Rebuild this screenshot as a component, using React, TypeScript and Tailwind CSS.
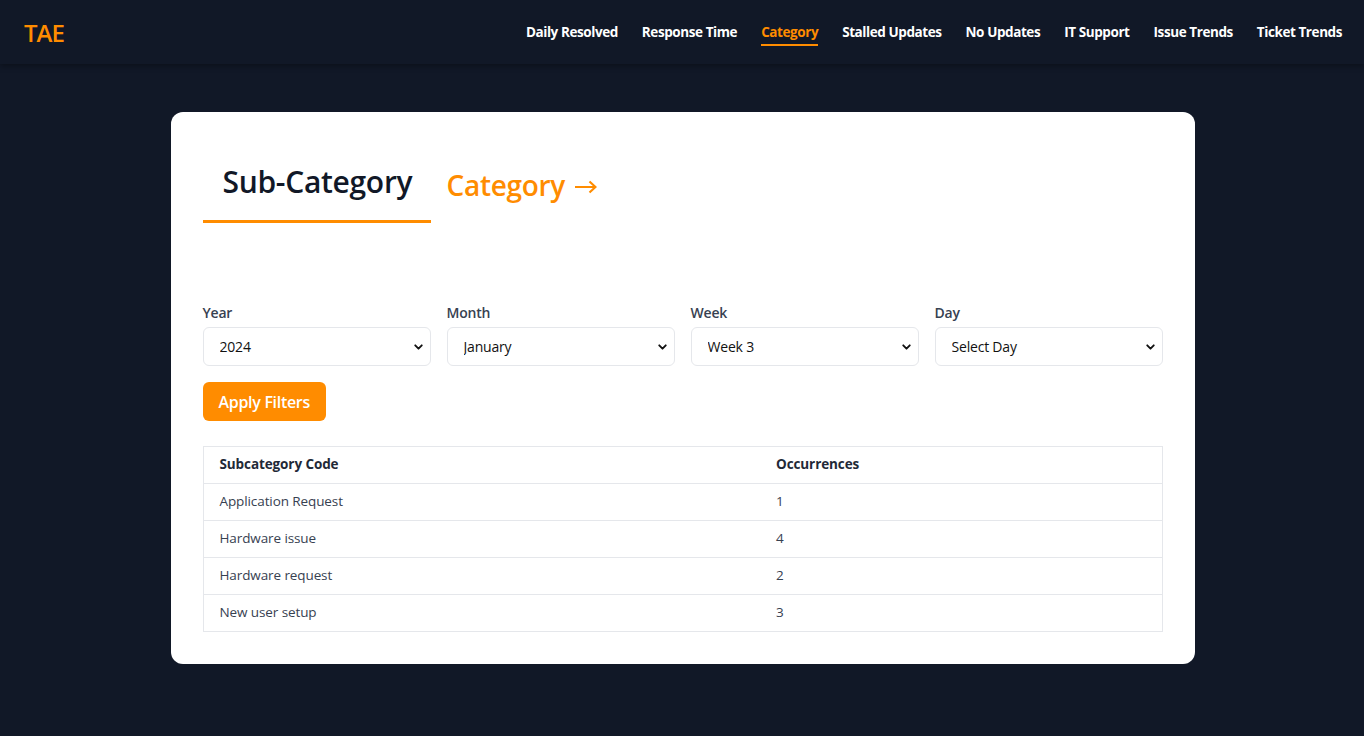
import React from "react";
import { ChevronDown } from "lucide-react";

const navItems = [
  "Daily Resolved",
  "Response Time",
  "Category",
  "Stalled Updates",
  "No Updates",
  "IT Support",
  "Issue Trends",
  "Ticket Trends",
];

const filters = [
  { label: "Year", value: "2024" },
  { label: "Month", value: "January" },
  { label: "Week", value: "Week 3" },
  { label: "Day", value: "Select Day" },
];

const rows = [
  { code: "Application Request", count: 1 },
  { code: "Hardware issue", count: 4 },
  { code: "Hardware request", count: 2 },
  { code: "New user setup", count: 3 },
];

const App = () => {
  return (
    <div className="min-h-screen bg-[#111827] font-['Open_Sans',sans-serif]">
      <header className="h-16 flex items-center justify-between pl-6 pr-[22px] bg-[#111827] shadow-[0_2px_6px_rgba(0,0,0,0.35)]">
        <div className="text-[#ff8c00] text-2xl font-semibold tracking-[-1px] pt-[2px]">TAE</div>
        <nav className="flex items-center gap-6 pt-[4px]">
          {navItems.map((item) => (
            <a
              key={item}
              className={
                item === "Category"
                  ? "text-[13.5px] font-bold tracking-[-0.42px] text-[#ff8c00] pb-[2px] border-b-2 border-[#ff8c00]"
                  : "text-[13.5px] font-bold tracking-[-0.42px] text-white pb-[2px] border-b-2 border-transparent"
              }
            >
              {item}
            </a>
          ))}
        </nav>
      </header>

      <main className="pt-12 pb-16 pl-px">
        <div className="mx-auto w-[1024px] bg-white rounded-xl px-8 pt-8 pb-8">
          <div className="flex items-end">
            <button className="w-[228px] text-left pl-5 pt-[20px] pb-[20px] border-b-[3px] border-[#ff8c00] text-[30px] leading-9 font-semibold text-[#111827] tracking-[-0.3px]">
              Sub-Category
            </button>
            <button className="ml-4 pb-[20px] flex items-center gap-[9px] text-[28px] leading-9 font-semibold text-[#ff8c00] tracking-[-0.3px]">
              <span>Category</span>
              <svg width="23" height="14" viewBox="0 0 23 14" fill="none" className="mt-[3px]">
                <path d="M1 7H21.5M15.5 1.5L21.5 7L15.5 12.5" stroke="#ff8c00" strokeWidth="2.2" />
              </svg>
            </button>
          </div>

          <div className="mt-[80px] grid grid-cols-4 gap-4">
            {filters.map((f) => (
              <div key={f.label}>
                <label className="block text-sm font-semibold text-[#374151] mb-1 tracking-[-0.2px]">
                  {f.label}
                </label>
                <div className="relative">
                  <select
                    defaultValue={f.value}
                    className="w-full h-[39px] appearance-none rounded-md border border-[#e5e7eb] bg-white pl-4 pr-8 text-sm text-[#111] tracking-[-0.2px] outline-none"
                  >
                    <option>{f.value}</option>
                  </select>
                  <ChevronDown
                    className="absolute right-[6px] top-1/2 -translate-y-1/2 pointer-events-none text-[#111]"
                    size={13}
                    strokeWidth={3.5}
                  />
                </div>
              </div>
            ))}
          </div>

          <button className="mt-4 h-[39px] px-4 rounded-md bg-[#ff8c00] text-white text-base font-semibold tracking-[-0.3px]">
            Apply Filters
          </button>

          <table className="mt-[25px] w-full border border-[#e5e7eb] border-collapse text-sm">
            <thead>
              <tr className="border-b border-[#e5e7eb]">
                <th className="w-[557px] h-[37px] px-4 text-left text-[13.5px] font-bold text-[#1f2937] tracking-[-0.1px]">
                  Subcategory Code
                </th>
                <th className="h-[37px] px-4 text-left text-[13.5px] font-bold text-[#1f2937] tracking-[-0.1px]">
                  Occurrences
                </th>
              </tr>
            </thead>
            <tbody>
              {rows.map((r) => (
                <tr key={r.code} className="border-b border-[#e5e7eb]">
                  <td className="h-[37px] px-4 text-[#374151] text-[13.5px] tracking-[-0.1px]">{r.code}</td>
                  <td className="h-[37px] px-4 text-[#374151] text-[13.5px]">{r.count}</td>
                </tr>
              ))}
            </tbody>
          </table>
        </div>
      </main>
    </div>
  );
};

export default App;
